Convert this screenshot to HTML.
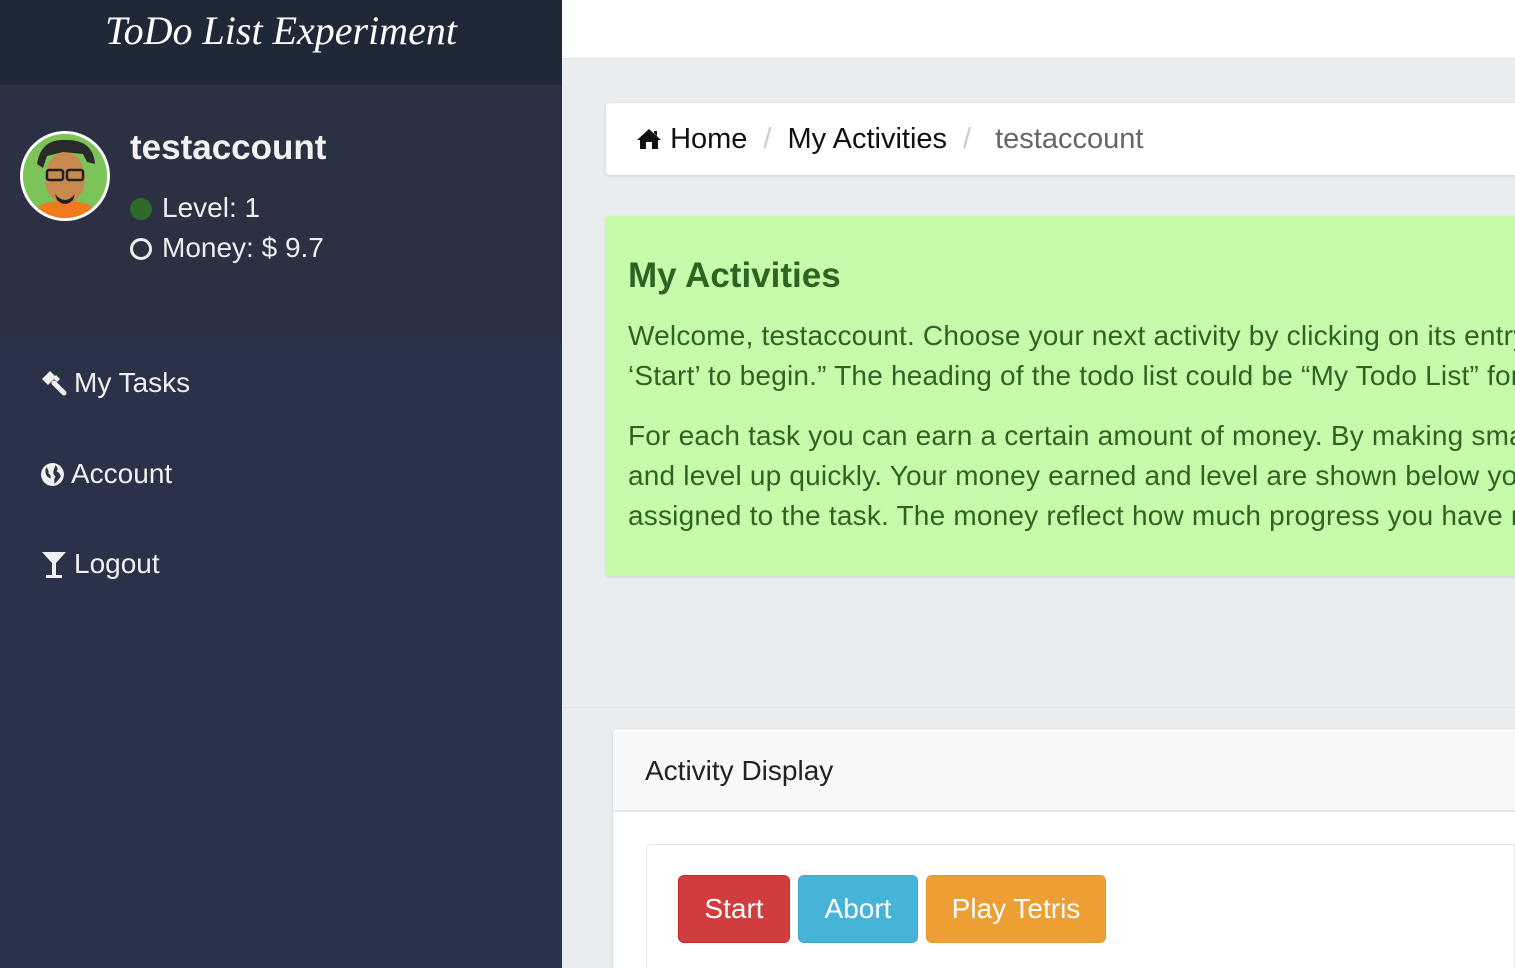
<!DOCTYPE html>
<html><head><meta charset="utf-8">
<style>
*{margin:0;padding:0;box-sizing:border-box}
html,body{width:1515px;height:968px;overflow:hidden}
body{background:#e9edf0;font-family:"Liberation Sans",Arial,sans-serif;position:relative}
.side{position:absolute;left:0;top:0;width:562px;height:968px;background:#2a3249}
.brand{position:absolute;left:0;top:0;width:562px;height:85px;background:#1f2837;color:#fff;font-family:"Liberation Serif",serif;font-style:italic;font-size:40px;text-align:center;line-height:62px}
.prof{position:absolute;left:0;top:85px;width:562px;height:252px;background:#2b3142}
.av{position:absolute;left:20px;top:131px;width:90px;height:90px;border-radius:50%;border:3px solid #fff;background:#6fbf4f;overflow:hidden}
.uname{position:absolute;left:130px;top:128px;color:#f2f2f2;font-weight:bold;font-size:35px}
.lvl{position:absolute;left:130px;top:192px;color:#eee;font-size:28px}
.mon{position:absolute;left:130px;top:232px;color:#eee;font-size:28px}
.nav{position:absolute;left:40px;color:#f0f0f0;font-size:28px;display:flex;align-items:center;gap:6px}
.top{position:absolute;left:562px;top:0;width:953px;height:59px;background:#fff;border-bottom:1px solid #e2e5e8}
.bc{position:absolute;left:606px;top:103px;width:909px;height:72px;background:#fff;border-radius:4px 0 0 4px;box-shadow:0 1px 3px rgba(0,0,0,.12);font-size:29px;line-height:72px;padding-left:30px;white-space:nowrap;overflow:hidden}
.bc .s{color:#ccc;margin:0 16px}
.green{position:absolute;left:606px;top:216px;width:909px;height:360px;background:#c6fca9;border-radius:4px 0 0 4px;box-shadow:0 1px 3px rgba(0,0,0,.12);color:#2d6426;padding:38px 0 0 22px;white-space:nowrap;overflow:hidden}
.green h1{font-size:35px;font-weight:bold;margin-bottom:18px;line-height:44px}
.green p{font-size:28px;letter-spacing:0.2px;line-height:40px;margin-bottom:20px}
.sep{position:absolute;left:562px;top:707px;width:953px;height:1px;background:#e0e3e6}
.panel{position:absolute;left:613px;top:729px;width:902px;height:239px;background:#fff;border-radius:4px 0 0 0;box-shadow:0 1px 3px rgba(0,0,0,.12);overflow:hidden}
.ph{height:83px;background:#f8f8f8;border-bottom:2px solid #e6e6e6;font-size:28px;color:#222;line-height:83px;padding-left:32px}
.inner{position:absolute;left:33px;top:115px;width:869px;height:124px;background:#fff;border:1px solid #e5e5e5;border-bottom:none;border-radius:4px 0 0 0}
.btn{position:absolute;top:30px;height:68px;border-radius:6px;color:#fff;font-size:28px;line-height:66px;text-align:center}
</style></head><body>
<div class="side"></div>
<div class="brand">ToDo List Experiment</div>
<div class="prof"></div>
<div class="av"><svg width="84" height="84" viewBox="0 0 84 84">
<rect width="84" height="84" fill="#7cc35a"/>
<path d="M8 84 Q12 70 28 68 L56 68 Q72 70 76 84Z" fill="#f07a1c"/>
<ellipse cx="42" cy="44" rx="20" ry="26" fill="#c98a4e"/>
<path d="M14 30 Q18 4 44 6 Q70 6 72 30 L64 28 L60 20 L40 18 L24 22 L20 34Z" fill="#2a2a2a"/>
<rect x="24" y="36" width="16" height="10" rx="2" fill="none" stroke="#222" stroke-width="2.5"/>
<rect x="44" y="36" width="16" height="10" rx="2" fill="none" stroke="#222" stroke-width="2.5"/>
<path d="M32 60 Q42 72 52 60 L50 66 Q42 74 34 66Z" fill="#222"/>
</svg></div>
<div class="uname">testaccount</div>
<div class="lvl"><span style="display:inline-block;width:22px;height:22px;border-radius:50%;background:#2f6a2a;vertical-align:-3px;margin-right:10px"></span>Level: 1</div>
<div class="mon"><span style="display:inline-block;width:22px;height:22px;border-radius:50%;border:3px solid #eee;vertical-align:-3px;margin-right:10px"></span>Money: $ 9.7</div>
<div class="nav" style="top:367px"><svg width="28" height="28" viewBox="0 0 28 28"><path d="M2 10 L10 2 L16 8 L8 16Z M13 9 L16 6 L20 10 L17 13Z" fill="#f0f0f0"/><path d="M14 14 L24 24" stroke="#f0f0f0" stroke-width="5" stroke-linecap="round"/></svg>My Tasks</div>
<div class="nav" style="top:458px"><svg width="25" height="25" viewBox="0 0 24 24"><circle cx="12" cy="12" r="11" fill="#f0f0f0"/><path d="M6 5 Q9 8 8 11 Q11 12 10 16 L7 14 Q4 10 6 5Z M15 3 Q18 6 16 9 Q19 10 20 14 Q17 18 14 21 Q13 16 15 14 Q12 12 13 8Z" fill="#2a3249"/></svg>Account</div>
<div class="nav" style="top:548px"><svg width="28" height="30" viewBox="0 0 28 30"><path d="M2 3 H26 L16 14 V26 H22 V29 H6 V26 H12 V14Z" fill="#f0f0f0"/></svg>Logout</div>

<div class="top"></div>
<div class="bc"><svg width="26" height="22" viewBox="0 0 26 22" style="vertical-align:-2px"><path d="M13 1 L25 12 L22 12 L22 21 L16 21 L16 14 L10 14 L10 21 L4 21 L4 12 L1 12Z M18 3 H21 V8 L18 5Z" fill="#111"/></svg> <span style="color:#111">Home</span><span class="s">/</span><span style="color:#111">My Activities</span><span class="s" style="margin-right:24px">/</span><span style="color:#666">testaccount</span></div>
<div class="green"><h1>My Activities</h1>
<p>Welcome, testaccount. Choose your next activity by clicking on its entry in the list and then<br>‘Start’ to begin.” The heading of the todo list could be “My Todo List” for example.</p>
<p>For each task you can earn a certain amount of money. By making small progress you can earn money<br>and level up quickly. Your money earned and level are shown below your name. A task has money<br>assigned to the task. The money reflect how much progress you have made.</p></div>
<div class="sep"></div>
<div class="panel"><div class="ph">Activity Display</div>
<div class="inner">
<div class="btn" style="left:31px;width:112px;background:#d13c3c;border:1px solid #c82a2a">Start</div>
<div class="btn" style="left:151px;width:120px;background:#46b3d9;border:1px solid #3ea9d0">Abort</div>
<div class="btn" style="left:279px;width:180px;background:#ee9f33;border:1px solid #e8942a">Play Tetris</div>
</div></div>
</body></html>
